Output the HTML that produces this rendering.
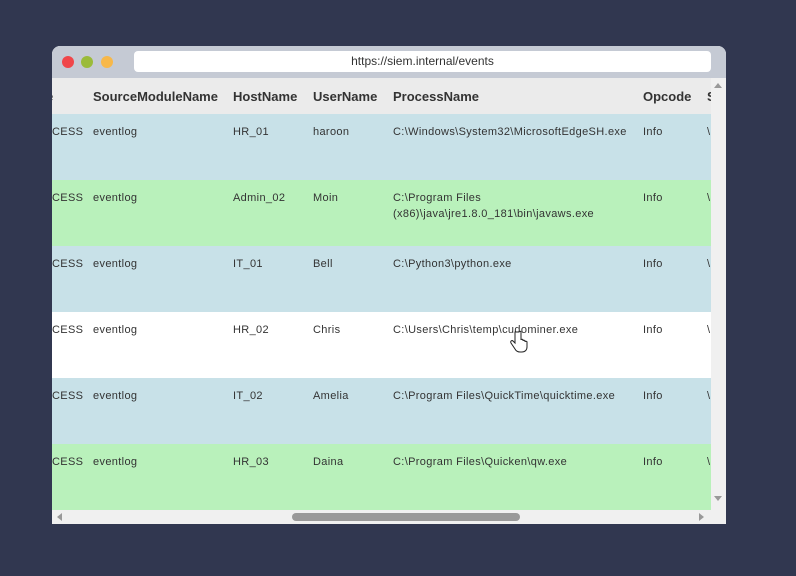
<!DOCTYPE html>
<html><head><style>
*{margin:0;padding:0;box-sizing:border-box}
body{width:796px;height:576px;background:#313750;font-family:"Liberation Sans",sans-serif;position:relative;overflow:hidden}
.win{position:absolute;left:52px;top:46px;width:674px;height:478px;background:#fff;border-radius:8px 8px 0 0;overflow:hidden}
.bar{position:absolute;left:0;top:0;width:674px;height:32px;background:#c5cad4}
.dot{position:absolute;top:10px;width:12px;height:12px;border-radius:50%}
.url{position:absolute;left:82px;top:5px;width:577px;height:21px;background:#fff;border-radius:4px;font-size:12px;color:#333;text-align:center;line-height:21px}
.tbl{position:absolute;left:0;top:32px;width:659px;height:432px;overflow:hidden}
.row{position:absolute;left:0;width:659px;height:66px;font-size:11px;color:#333;letter-spacing:0.35px}
.hdr{top:0;height:36px;background:#ebebeb;font-size:13px;font-weight:bold;color:#333;letter-spacing:0}
.c{position:absolute;white-space:nowrap}
.row .c{top:10px;line-height:16px}
.hdr .c{top:11px}
.vs{position:absolute;left:659px;top:32px;width:15px;height:432px;background:#f0f0f0}
.hs{position:absolute;left:0;top:464px;width:674px;height:14px;background:#f0f0f0}
</style></head><body>
<div class="win">
<div class="bar">
<div class="dot" style="left:10px;background:#f0464a"></div>
<div class="dot" style="left:29px;background:#9bbb3a"></div>
<div class="dot" style="left:49px;background:#f7b84a"></div>
<div class="url">https://siem.internal/events</div>
</div>
<div class="tbl">
<div class="row hdr"><span class="c" style="left:-6px">e</span><span class="c" style="left:41px">SourceModuleName</span><span class="c" style="left:181px">HostName</span><span class="c" style="left:261px">UserName</span><span class="c" style="left:341px">ProcessName</span><span class="c" style="left:591px">Opcode</span><span class="c" style="left:655px">S</span></div>
<div class="row" style="top:36px;background:#c8e1e8"><span class="c" style="left:0">CESS</span><span class="c" style="left:41px">eventlog</span><span class="c" style="left:181px">HR_01</span><span class="c" style="left:261px">haroon</span><span class="c" style="left:341px">C:\Windows\System32\MicrosoftEdgeSH.exe</span><span class="c" style="left:591px">Info</span><span class="c" style="left:655px">\</span></div>
<div class="row" style="top:102px;background:#b9f1bb"><span class="c" style="left:0">CESS</span><span class="c" style="left:41px">eventlog</span><span class="c" style="left:181px">Admin_02</span><span class="c" style="left:261px">Moin</span><span class="c" style="left:341px">C:\Program Files<br>(x86)\java\jre1.8.0_181\bin\javaws.exe</span><span class="c" style="left:591px">Info</span><span class="c" style="left:655px">\</span></div>
<div class="row" style="top:168px;background:#c8e1e8"><span class="c" style="left:0">CESS</span><span class="c" style="left:41px">eventlog</span><span class="c" style="left:181px">IT_01</span><span class="c" style="left:261px">Bell</span><span class="c" style="left:341px">C:\Python3\python.exe</span><span class="c" style="left:591px">Info</span><span class="c" style="left:655px">\</span></div>
<div class="row" style="top:234px;background:#fff"><span class="c" style="left:0">CESS</span><span class="c" style="left:41px">eventlog</span><span class="c" style="left:181px">HR_02</span><span class="c" style="left:261px">Chris</span><span class="c" style="left:341px">C:\Users\Chris\temp\cudominer.exe</span><span class="c" style="left:591px">Info</span><span class="c" style="left:655px">\</span></div>
<div class="row" style="top:300px;background:#c8e1e8"><span class="c" style="left:0">CESS</span><span class="c" style="left:41px">eventlog</span><span class="c" style="left:181px">IT_02</span><span class="c" style="left:261px">Amelia</span><span class="c" style="left:341px">C:\Program Files\QuickTime\quicktime.exe</span><span class="c" style="left:591px">Info</span><span class="c" style="left:655px">\</span></div>
<div class="row" style="top:366px;background:#b9f1bb"><span class="c" style="left:0">CESS</span><span class="c" style="left:41px">eventlog</span><span class="c" style="left:181px">HR_03</span><span class="c" style="left:261px">Daina</span><span class="c" style="left:341px">C:\Program Files\Quicken\qw.exe</span><span class="c" style="left:591px">Info</span><span class="c" style="left:655px">\</span></div>
</div>
<div class="vs"><div style="position:absolute;left:3px;top:5px;border:4px solid transparent;border-bottom:5px solid #999;border-top:0"></div><div style="position:absolute;left:3px;top:418px;border:4px solid transparent;border-top:5px solid #999;border-bottom:0"></div></div>
<div class="hs"><div style="position:absolute;left:5px;top:3px;border:4px solid transparent;border-right:5px solid #999;border-left:0"></div><div style="position:absolute;left:240px;top:3px;width:228px;height:8px;border-radius:4px;background:#999"></div><div style="position:absolute;left:647px;top:3px;border:4px solid transparent;border-left:5px solid #999;border-right:0"></div></div>
</div>
<svg style="position:absolute;left:510px;top:330px" width="18" height="24" viewBox="0 0 18 24"><path d="M5 2v11l-2-2c-1-1-3 0-2 2l4 6c1 2 3 3 5 3h2c3 0 5-2 5-5v-5c0-1-2-1-2 0v-1c0-1-2-1-2 0v-1c0-1-2-1-2 0V2c0-1-2-1-2 0z" fill="#fff" stroke="#222" stroke-width="1"/></svg>
</body></html>
